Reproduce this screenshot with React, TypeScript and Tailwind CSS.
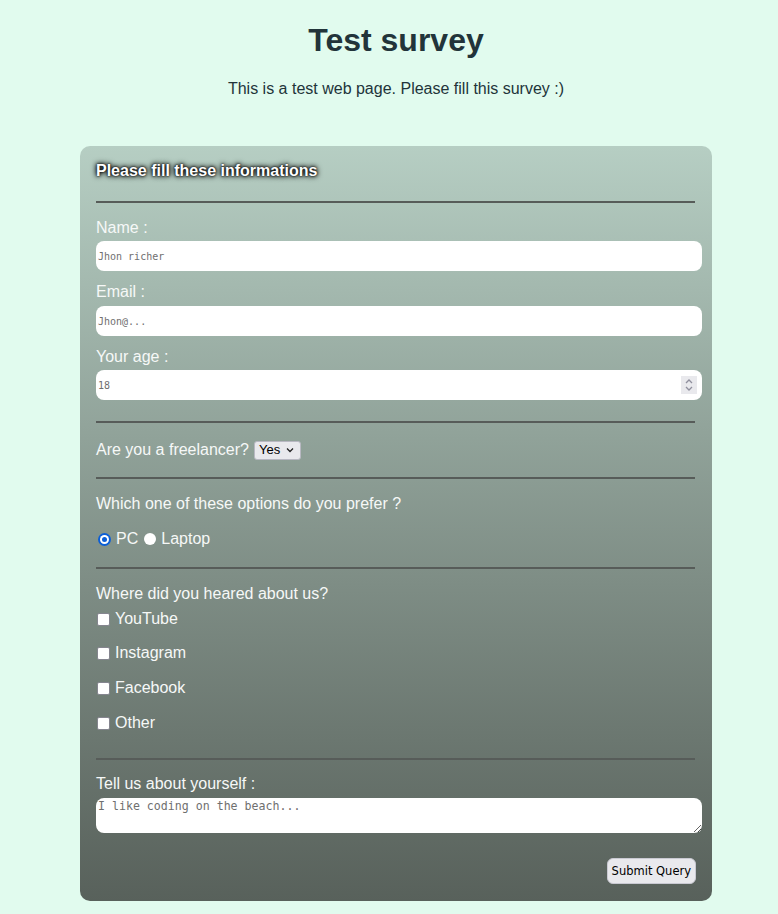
import React, { useState } from "react";

const Divider: React.FC<{ className?: string }> = ({ className = "" }) => (
  <div className={`h-[2px] w-[599px] bg-[#575c59] ${className}`} />
);

const CheckRow: React.FC<{ label: string; className?: string }> = ({ label, className = "" }) => {
  const [checked, setChecked] = useState(false);
  return (
    <label className={`flex items-center h-[18px] cursor-pointer ${className}`}>
      <span
        onClick={() => setChecked(!checked)}
        className="ml-[1px] mr-[5px] w-[13px] h-[13px] rounded-[2px] border border-[#85858f] bg-white flex items-center justify-center text-[10px] leading-none text-[#333]"
      >
        {checked ? "✓" : ""}
      </span>
      {label}
    </label>
  );
};

export default function App() {
  const [device, setDevice] = useState("pc");

  return (
    <div className="min-h-[914px] bg-[#e1fbee] font-['Liberation_Sans',Arial,sans-serif] pb-[13px]">
      {/* Header */}
      <div className="w-[792px]">
        <h1 className="pt-[22px] text-center text-[32px] leading-[37px] font-bold text-[#22343a]">
          Test survey
        </h1>
        <p className="mt-[21px] text-center text-[16px] leading-[18px] text-[#22343a]">
          This is a test web page. Please fill this survey :)
        </p>
      </div>

      {/* Form card */}
      <form
        onSubmit={(e) => e.preventDefault()}
        className="mt-[48px] ml-[80px] w-[632px] rounded-[10px] bg-gradient-to-b from-[#b6cec3] to-[#58615b] px-[16px] pt-[16px] pb-[17px] text-[16px] leading-[18px] text-[#f6f8f7]"
      >
        <h2 className="font-bold text-white [text-shadow:0_0_4px_#000,0_0_6px_#000,0_0_2px_#000]">
          Please fill these informations
        </h2>
        <Divider className="mt-[21px]" />

        <label className="block mt-[16px]">Name :</label>
        <input
          type="text"
          placeholder="Jhon richer"
          className="mt-[4px] block w-[606px] h-[30px] rounded-[8px] bg-white px-[2px] text-[10px] font-['DejaVu_Sans_Mono',monospace] text-[#333] placeholder:text-[#6f6f6f] outline-none"
        />

        <label className="block mt-[12px]">Email :</label>
        <input
          type="email"
          placeholder="Jhon@..."
          className="mt-[5px] block w-[606px] h-[30px] rounded-[8px] bg-white px-[2px] text-[10px] font-['DejaVu_Sans_Mono',monospace] text-[#333] placeholder:text-[#6f6f6f] outline-none"
        />

        <label className="block mt-[12px]">Your age :</label>
        <div className="mt-[4px] relative w-[606px] h-[30px] rounded-[8px] bg-white flex items-center">
          <input
            type="text"
            placeholder="18"
            className="w-full h-full rounded-[8px] bg-transparent px-[2px] text-[10px] font-['DejaVu_Sans_Mono',monospace] text-[#333] placeholder:text-[#6f6f6f] outline-none"
          />
          {/* spinner */}
          <span className="absolute right-[5px] top-[6px] w-[16px] h-[18px] bg-[#e9e9ed] flex items-center justify-center">
            <svg width="10" height="14" viewBox="0 0 10 14" fill="none" stroke="#8f8f9d" strokeWidth="1.3">
              <path d="M2 5 L5 2 L8 5" />
              <path d="M2 9 L5 12 L8 9" />
            </svg>
          </span>
        </div>

        <Divider className="mt-[21px]" />

        <div className="mt-[17px] flex items-center h-[20px]">
          <span>Are you a freelancer?</span>
          <span className="ml-[5px] h-[19px] w-[47px] rounded-[3px] border border-[#b8b8c2] bg-[#e9e9ed] flex items-center pl-[4px] text-[13px] text-black">
            Yes
            <svg className="ml-[6px]" width="8" height="6" viewBox="0 0 8 6" fill="none" stroke="#222" strokeWidth="1.3">
              <path d="M1 1.5 L4 4.5 L7 1.5" />
            </svg>
          </span>
        </div>

        <Divider className="mt-[17px]" />

        <p className="mt-[16px]">Which one of these options do you prefer ?</p>
        <div className="mt-[17px] flex items-center h-[18px]">
          <label className="flex items-center cursor-pointer" onClick={() => setDevice("pc")}>
            <span
              className={`ml-[2px] mr-[5px] w-[13px] h-[13px] rounded-full flex items-center justify-center ${
                device === "pc" ? "bg-[#0b5ed7]" : "bg-white"
              }`}
            >
              {device === "pc" && (
                <span className="w-[9px] h-[9px] rounded-full bg-white flex items-center justify-center">
                  <span className="w-[5px] h-[5px] rounded-full bg-[#0b5ed7]" />
                </span>
              )}
            </span>
            PC
          </label>
          <label className="ml-[6px] flex items-center cursor-pointer" onClick={() => setDevice("laptop")}>
            <span
              className={`mr-[5px] w-[12px] h-[12px] rounded-full flex items-center justify-center ${
                device === "laptop" ? "bg-[#0b5ed7]" : "bg-white"
              }`}
            >
              {device === "laptop" && (
                <span className="w-[8px] h-[8px] rounded-full bg-white flex items-center justify-center">
                  <span className="w-[4px] h-[4px] rounded-full bg-[#0b5ed7]" />
                </span>
              )}
            </span>
            Laptop
          </label>
        </div>

        <Divider className="mt-[19px]" />

        <p className="mt-[16px]">Where did you heared about us?</p>
        <CheckRow label="YouTube" className="mt-[7px]" />
        <CheckRow label="Instagram" className="mt-[16px]" />
        <CheckRow label="Facebook" className="mt-[17px]" />
        <CheckRow label="Other" className="mt-[17px]" />

        <Divider className="mt-[26px]" />

        <label className="block mt-[15px]">Tell us about yourself :</label>
        <textarea
          placeholder="I like coding on the beach..."
          className="mt-[5px] block w-[606px] h-[35px] rounded-[8px] bg-white px-[2px] py-[1px] text-[11.6px] leading-[14px] font-['DejaVu_Sans_Mono',monospace] text-[#333] placeholder:text-[#6f6f6f] outline-none resize"
        />

        <div className="mt-[25px] flex justify-end w-[600px]">
          <button
            type="submit"
            className="h-[26px] px-[4px] rounded-[6px] border border-[#c9c9d2] bg-[#e9e9ed] text-[11.5px] text-black font-['DejaVu_Sans',sans-serif]"
          >
            Submit Query
          </button>
        </div>
      </form>
    </div>
  );
}
